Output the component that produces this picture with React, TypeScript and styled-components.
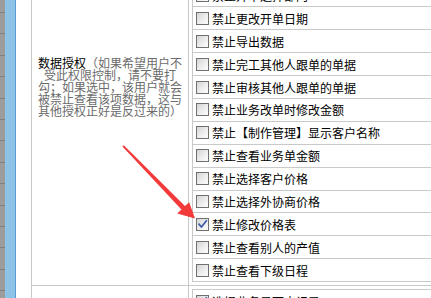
import { createGlobalStyle, styled } from "styled-components";

const GlobalStyle = createGlobalStyle`
  html, body {
    margin: 0;
    padding: 0;
    background: #fff;
    overflow: hidden;
  }
  body {
    font-family: "Noto Sans CJK SC", "Noto Sans", sans-serif;
  }
`;

const LINE = "#c9c9c9";

const Screen = styled.div`
  position: relative;
  display: flex;
  align-items: flex-start;
  width: 431px;
  height: 298px;
  overflow: hidden;
`;

const ListEdge = styled.div`
  flex: 0 0 5px;
  align-self: stretch;
  background-color: #9c9c9c;
  background-image: repeating-linear-gradient(
    to bottom,
    #7f7f7f 0 1px,
    #9c9c9c 1px 21.4px
  );
  background-position: 0 12px;
`;

const BlueBar = styled.div`
  flex: 0 0 11px;
  align-self: stretch;
  box-sizing: border-box;
  background: #8ec3e8;
  border-right: 1px solid #5a9bd6;
`;

const Gutter = styled.div`
  flex: 0 0 15px;
`;

const Sheet = styled.div`
  flex: 1;
  min-width: 0;
  margin-top: -112px;
  border-top: 1px solid ${LINE};
  border-left: 1px solid ${LINE};
`;

const PermRow = styled.div`
  display: flex;
  border-bottom: 1px solid ${LINE};
`;

const Caption = styled.div`
  flex: 0 0 157px;
  box-sizing: border-box;
  border-right: 1px solid ${LINE};
  padding: 3px;
  display: flex;
  align-items: center;
`;

const CaptionText = styled.div`
  width: 100%;
  text-align: center;
  font-size: 12px;
  line-height: 12px;
  color: #6b6b6b;
`;

const CaptionTitle = styled.span`
  color: #000;
`;

const OptionCell = styled.div`
  flex: 1;
  min-width: 0;
  padding: 3px 0 3px 3px;
`;

const OptionTable = styled.div`
  border-top: 1px solid ${LINE};
  border-left: 1px solid ${LINE};
`;

const OptionRow = styled.label`
  display: flex;
  align-items: center;
  gap: 3px;
  box-sizing: border-box;
  height: 22.9px;
  padding-left: 3px;
  border-bottom: 1px solid ${LINE};
  font-size: 12px;
  color: #000;
  white-space: nowrap;
`;

const Box = styled.span<{ $checked?: boolean }>`
  position: relative;
  flex: 0 0 13px;
  box-sizing: border-box;
  width: 13px;
  height: 13px;
  border: 1px solid #707070;
  background: linear-gradient(135deg, #d4d4d4 0%, #eeeeee 55%, #fdfdfd 100%);
  svg {
    position: absolute;
    left: 0;
    top: 0;
  }
`;

const Arrow = styled.svg`
  position: absolute;
  left: 0;
  top: 0;
  pointer-events: none;
`;

type Option = { label: string; checked?: boolean };

const dataOptions: Option[] = [
  { label: "禁止查看成本价格" },
  { label: "禁止删除他人单据" },
  { label: "禁止修改他人单据" },
  { label: "禁止反审核单据" },
  { label: "禁止开单选择部门" },
  { label: "禁止更改开单日期" },
  { label: "禁止导出数据" },
  { label: "禁止完工其他人跟单的单据" },
  { label: "禁止审核其他人跟单的单据" },
  { label: "禁止业务改单时修改金额" },
  { label: "禁止【制作管理】显示客户名称" },
  { label: "禁止查看业务单金额" },
  { label: "禁止选择客户价格" },
  { label: "禁止选择外协商价格" },
  { label: "禁止修改价格表", checked: true },
  { label: "禁止查看别人的产值" },
  { label: "禁止查看下级日程" },
];

const otherOptions: Option[] = [
  { label: "选择业务员下本记录", checked: true },
  { label: "选择跟单员下本记录" },
  { label: "选择客户下本记录" },
  { label: "选择部门下本记录" },
];

function CheckBox({ checked }: { checked?: boolean }) {
  return (
    <Box $checked={checked}>
      {checked && (
        <svg width="11" height="11" viewBox="0 0 11 11">
          <path
            d="M2 5.2 L4.4 8 L9.4 1.8"
            fill="none"
            stroke="#3d5ea9"
            strokeWidth="1.8"
            strokeLinecap="round"
            strokeLinejoin="round"
          />
        </svg>
      )}
    </Box>
  );
}

function OptionList({ options }: { options: Option[] }) {
  return (
    <OptionTable>
      {options.map((o) => (
        <OptionRow key={o.label}>
          <CheckBox checked={o.checked} />
          {o.label}
        </OptionRow>
      ))}
    </OptionTable>
  );
}

export default function App() {
  return (
    <>
      <GlobalStyle />
      <Screen>
        <ListEdge />
        <BlueBar />
        <Gutter />
        <Sheet>
          <PermRow>
            <Caption>
              <CaptionText>
                <CaptionTitle>数据授权</CaptionTitle>
                （如果希望用户不受此权限控制，请不要打勾；如果选中，该用户就会被禁止查看该项数据，这与其他授权正好是反过来的）
              </CaptionText>
            </Caption>
            <OptionCell>
              <OptionList options={dataOptions} />
            </OptionCell>
          </PermRow>
          <PermRow>
            <Caption>
              <CaptionText>
                <CaptionTitle>记录授权</CaptionTitle>
              </CaptionText>
            </Caption>
            <OptionCell>
              <OptionList options={otherOptions} />
            </OptionCell>
          </PermRow>
        </Sheet>
        <Arrow width="431" height="298" viewBox="0 0 431 298">
          <polygon
            points="122.4,146.6 123.8,145.2 185,206.1 189.2,202.2 195,218.5 177.2,213.4 181.4,209.5"
            fill="#f23a3a"
          />
        </Arrow>
      </Screen>
    </>
  );
}
